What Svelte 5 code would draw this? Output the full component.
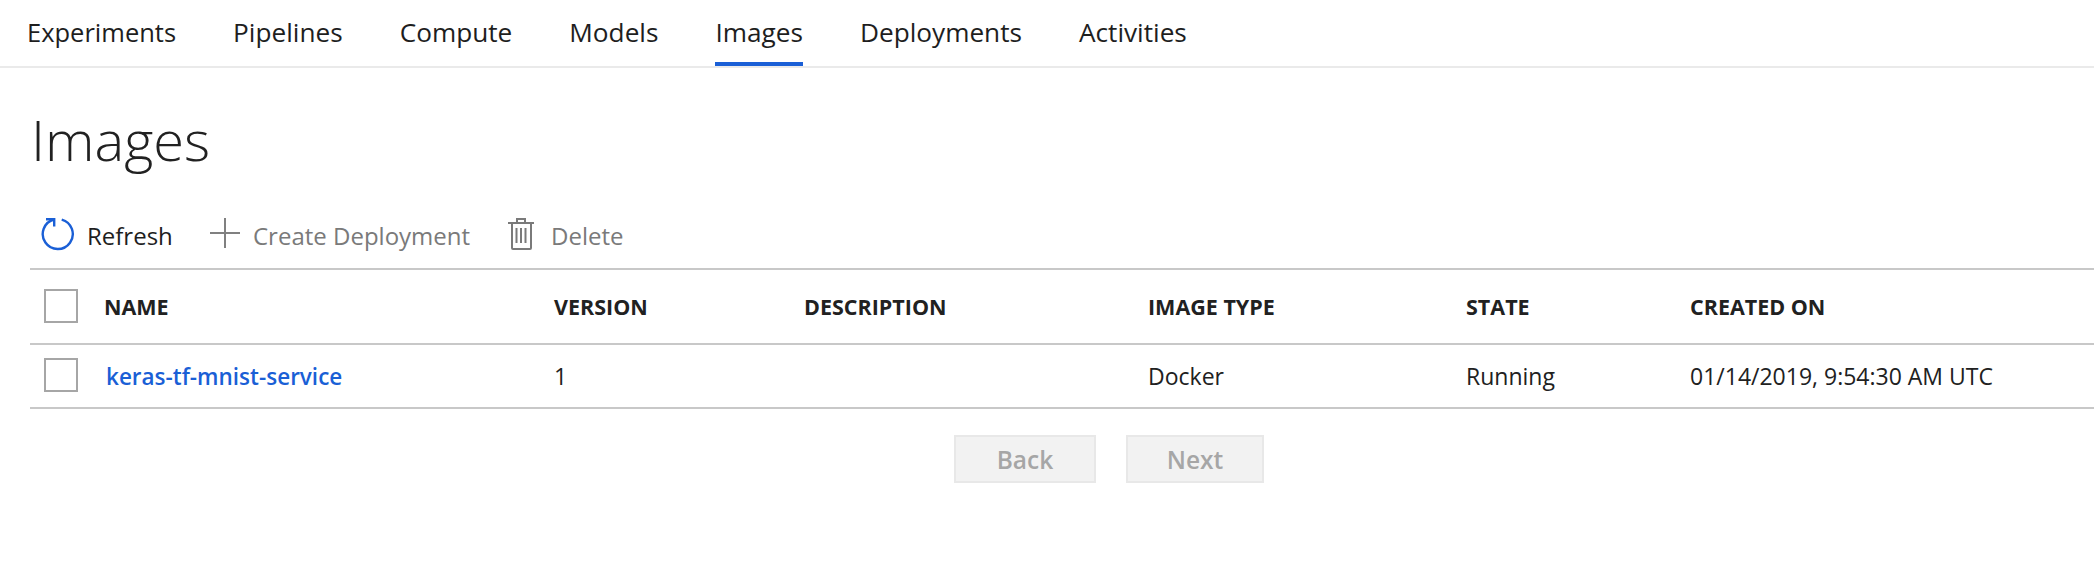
<script>
  const tabs = ['Experiments', 'Pipelines', 'Compute', 'Models', 'Images', 'Deployments', 'Activities'];
  const heads = ['NAME', 'VERSION', 'DESCRIPTION', 'IMAGE TYPE', 'STATE', 'CREATED ON'];
</script>

<div class="page">
  <nav class="tabs">
    {#each tabs as t}
      <a class="tab" class:active={t === 'Images'}>{t}</a>
    {/each}
  </nav>

  <main class="content">
    <h1>Images</h1>

    <div class="toolbar">
      <button class="action refresh">
        <svg width="34" height="34" viewBox="0 0 34 34" fill="none" stroke="#1a5fd6" stroke-width="2.4">
          <path d="M20.7 1.55A15 15 0 1 1 13 1.5" />
          <path d="M5 1.2H13.2V8.5" />
        </svg>
        <span>Refresh</span>
      </button>
      <button class="action plus">
        <svg width="30" height="34" viewBox="0 0 30 34" fill="none" stroke="#808080" stroke-width="2">
          <path d="M0 15H30M15 0V30" />
        </svg>
        <span>Create Deployment</span>
      </button>
      <button class="action trash">
        <svg width="26" height="34" viewBox="0 0 26 34" fill="none" stroke="#7a7a7a" stroke-width="2">
          <path d="M0 5H26M9 5V1H17V5M4 5V30A1 1 0 0 0 5 31H22A1 1 0 0 0 23 30V5" />
          <path d="M8.500 10V25M13 10V25M17.500 10V25" />
        </svg>
        <span>Delete</span>
      </button>
    </div>

    <div class="table">
      <div class="row head">
        <span class="check"></span>
        {#each heads as h}<span class="cell">{h}</span>{/each}
      </div>
      <div class="row body">
        <span class="check"></span>
        <a class="cell link">keras-tf-mnist-service</a>
        <span class="cell">1</span>
        <span class="cell"></span>
        <span class="cell">Docker</span>
        <span class="cell">Running</span>
        <span class="cell">01/14/2019, 9:54:30 AM UTC</span>
      </div>
    </div>

    <div class="pager">
      <button class="page-btn back">Back</button>
      <button class="page-btn next">Next</button>
    </div>
  </main>
</div>

<style>
  :global(body) {
    margin: 0;
    background: #fff;
  }
  .page {
    height: 562px;
    overflow: hidden;
    font-family: "Open Sans", "Noto Sans", sans-serif;
    color: #212121;
  }
  .tabs {
    display: flex;
    gap: 57px;
    height: 66px;
    padding-left: 27px;
    border-bottom: 2px solid #eaeaea;
  }
  .tab {
    height: 62px;
    line-height: 65px;
    font-size: 26.2px;
    color: #1e1e1e;
    border-bottom: 4px solid transparent;
  }
  .tab:first-child {
    font-size: 25.5px;
  }
  .tab.active {
    border-bottom-color: #1a5fd6;
  }
  .content {
    padding-left: 30px;
  }
  h1 {
    margin: 0;
    padding: 33px 0 0 1px;
    height: 76px;
    font-size: 56px;
    line-height: 76px;
    font-weight: 300;
    color: #212121;
  }
  .toolbar {
    display: flex;
    margin-top: 32px;
    height: 52px;
    padding-left: 11px;
    align-items: center;
    border-bottom: 2px solid #c8c8c8;
    padding-bottom: 7px;
  }
  .action {
    display: flex;
    align-items: center;
    padding: 0;
    border: 0;
    background: none;
    font: inherit;
    font-size: 24px;
    color: #7a7a7a;
  }
  .action svg {
    flex: none;
  }
  .refresh {
    color: #1e1e1e;
    gap: 12px;
    width: 169px;
  }
  .plus {
    gap: 13px;
    width: 298px;
  }
  .trash {
    gap: 17px;
  }
  .row {
    display: grid;
    grid-template-columns: 60px 450px 250px 344px 318px 224px 1fr;
    align-items: center;
    padding-left: 14px;
    border-bottom: 2px solid #c8c8c8;
    font-size: 23px;
  }
  .head {
    height: 73px;
    font-weight: 700;
    font-size: 21.5px;
  }
  .body {
    height: 62px;
  }
  .check {
    display: block;
    width: 30px;
    height: 30px;
    margin-bottom: 2px;
    border: 2px solid #a6a6a6;
  }
  .link {
    color: #1a5fd6;
    font-weight: 600;
    font-size: 22.5px;
    padding-left: 2px;
  }
  .pager {
    display: flex;
    gap: 30px;
    margin-top: 26px;
    padding-left: 924px;
  }
  .page-btn {
    height: 48px;
    border: 2px solid #e8e8e8;
    background: #f2f2f2;
    color: #a6a6a6;
    font: inherit;
    font-size: 24.5px;
    font-weight: 600;
    padding: 0;
  }
  .back {
    width: 142px;
  }
  .next {
    width: 138px;
  }
</style>
